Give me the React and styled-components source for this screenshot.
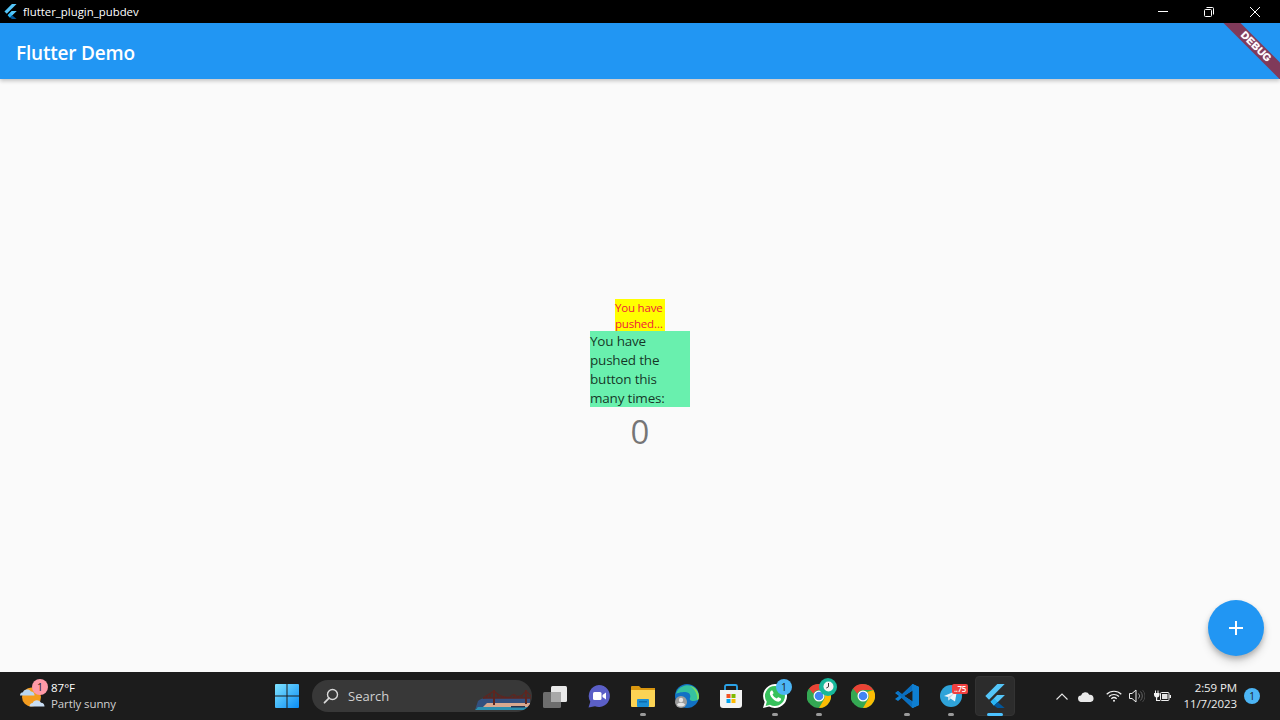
import React from 'react';
import styled, { createGlobalStyle } from 'styled-components';

const GlobalStyle = createGlobalStyle`
  html, body, #root {
    margin: 0;
    padding: 0;
    width: 100%;
    height: 100%;
    overflow: hidden;
  }
  body {
    font-family: 'Open Sans', 'Noto Sans', sans-serif;
  }
`;

const Screen = styled.div`
  width: 1280px;
  height: 720px;
  display: flex;
  flex-direction: column;
`;

const TitleBar = styled.div`
  height: 23px;
  flex: none;
  background: #000;
  display: flex;
  align-items: center;
  padding: 0 2px 0 3px;
  box-sizing: border-box;
  color: #fff;
`;

const WindowTitle = styled.div`
  margin-left: 5px;
  font-size: 11.4px;
  flex: 1;
`;

const WindowButton = styled.div`
  width: 46px;
  height: 23px;
  display: flex;
  align-items: center;
  justify-content: center;
`;

const AppWindow = styled.div`
  position: relative;
  flex: 1;
  display: flex;
  flex-direction: column;
  background: #fafafa;
`;

const AppBar = styled.div`
  position: relative;
  height: 56px;
  flex: none;
  display: flex;
  align-items: center;
  padding: 3px 0 0 16px;
  box-sizing: border-box;
  background: #2196f3;
  color: #fff;
  font-size: 19px;
  font-weight: 600;
  letter-spacing: -0.2px;
  box-shadow: 0 2px 4px rgba(0, 0, 0, 0.22);
  overflow: hidden;
`;

const DebugBanner = styled.div`
  position: absolute;
  top: 17.75px;
  right: -36.25px;
  width: 120px;
  height: 12px;
  line-height: 12px;
  transform: rotate(45deg);
  background: #803a5a;
  color: #fff;
  font-family: 'Liberation Sans', sans-serif;
  font-size: 10.2px;
  font-weight: 700;
  letter-spacing: 0.3px;
  text-align: center;
  text-shadow: 0 0 1px #fff;
`;

const Body = styled.div`
  flex: 1;
  display: flex;
  flex-direction: column;
  align-items: center;
  justify-content: center;
`;

const ShortLabel = styled.div`
  width: 50px;
  height: 32px;
  padding-top: 1px;
  box-sizing: border-box;
  background: #ffff00;
  color: #f0203a;
  font-size: 11.5px;
  line-height: 16px;
  letter-spacing: -0.2px;
  white-space: pre-line;
`;

const LongLabel = styled.div`
  width: 100px;
  height: 76px;
  padding-top: 1px;
  box-sizing: border-box;
  background: #69f0ae;
  color: rgba(0, 0, 0, 0.8);
  font-size: 13.5px;
  line-height: 19px;
  letter-spacing: -0.2px;
`;

const Counter = styled.div`
  height: 46px;
  line-height: 50px;
  font-size: 33px;
  color: rgba(0, 0, 0, 0.54);
`;

const Fab = styled.div`
  position: absolute;
  right: 16px;
  bottom: 16px;
  width: 56px;
  height: 56px;
  border-radius: 50%;
  background: #2196f3;
  display: flex;
  align-items: center;
  justify-content: center;
  box-shadow: 0 3px 5px rgba(0, 0, 0, 0.2), 0 6px 10px rgba(0, 0, 0, 0.14);
`;

const Taskbar = styled.div`
  height: 48px;
  flex: none;
  background: #1c1c1c;
  display: flex;
  align-items: center;
  color: #fff;
`;

const Weather = styled.div`
  width: 265px;
  height: 48px;
  flex: none;
  display: flex;
  align-items: center;
  padding-left: 19px;
  box-sizing: border-box;
`;

const WeatherIconBox = styled.div`
  position: relative;
  width: 28px;
  height: 28px;
  margin-right: 4px;
`;

const WeatherBadge = styled.div`
  position: absolute;
  top: -3px;
  right: -1px;
  width: 16px;
  height: 16px;
  border-radius: 50%;
  background: #ff9aa8;
  color: #222;
  font-size: 10.5px;
  line-height: 16px;
  text-align: center;
`;

const WeatherText = styled.div`
  display: flex;
  flex-direction: column;
  font-size: 11.5px;
  font-weight: 500;
  line-height: 16px;
`;

const Muted = styled.span`
  color: #cfcfcf;
  font-weight: 400;
  letter-spacing: -0.1px;
`;

const Slot = styled.div`
  position: relative;
  width: 44px;
  height: 48px;
  flex: none;
  display: flex;
  align-items: center;
  justify-content: center;
`;

const ActiveBack = styled.div`
  position: absolute;
  left: 2px;
  top: 4px;
  width: 40px;
  height: 40px;
  border-radius: 4px;
  background: #2c2c2c;
  border: 1px solid #333;
  box-sizing: border-box;
`;

const IconLayer = styled.div`
  position: relative;
  display: flex;
`;

const RunDot = styled.div`
  position: absolute;
  left: 50%;
  bottom: 4px;
  transform: translateX(-50%);
  width: ${props => (props.$active ? 16 : 6)}px;
  height: 3px;
  border-radius: 2px;
  background: ${props => (props.$active ? '#4cc2ff' : '#9a9a9a')};
`;

const CountBadge = styled.div`
  position: absolute;
  top: 7px;
  right: 5px;
  width: 16px;
  height: 16px;
  border-radius: 50%;
  background: #4cb5f5;
  color: #1c1c1c;
  font-size: 10.5px;
  line-height: 16px;
  text-align: center;
`;

const TelegramBadge = styled.div`
  position: absolute;
  top: 12px;
  right: 5px;
  width: 16px;
  height: 10px;
  border-radius: 2px;
  background: #f04040;
  color: #fff;
  font-size: 8px;
  font-weight: 600;
  line-height: 10px;
  text-align: center;
  letter-spacing: -0.4px;
  white-space: nowrap;
`;

const SearchBox = styled.div`
  width: 220px;
  height: 32px;
  flex: none;
  margin: 0 1px 0 3px;
  border-radius: 16px;
  background: #383838;
  display: flex;
  align-items: center;
  padding-left: 11px;
  box-sizing: border-box;
  position: relative;
  overflow: hidden;
`;

const SearchText = styled.span`
  margin-left: 9px;
  font-size: 13px;
  color: #d0d0d0;
`;

const SearchArt = styled.div`
  position: absolute;
  right: 1px;
  bottom: 0;
  display: flex;
`;

const Tray = styled.div`
  margin-left: auto;
  display: flex;
  align-items: center;
  padding-right: 20px;
`;

const TrayIcon = styled.div`
  display: flex;
  width: ${props => props.$w}px;
  justify-content: center;
`;

const Clock = styled.div`
  width: 58px;
  font-size: 11.5px;
  line-height: 16px;
  text-align: right;
  color: #eee;
  letter-spacing: -0.1px;
`;

const NotifyDot = styled.div`
  width: 16px;
  height: 16px;
  margin-left: 7px;
  border-radius: 50%;
  background: #4cb5f5;
  color: #1c1c1c;
  font-size: 10px;
  line-height: 16px;
  text-align: center;
`;

const ClockBadge = styled.div`
  position: absolute;
  top: 6px;
  right: 4px;
  display: flex;
`;

const FlutterLogo = ({ size }) => (
  <svg width={size} height={size} viewBox="0 0 24 24">
    <polygon points="14.3,0 21.7,0 6,15.7 2.3,12" fill="#54c5f8" />
    <polygon points="14.3,11.1 21.7,11.1 11,21.7 7.6,17.8" fill="#54c5f8" />
    <polygon points="11,14.4 14.3,11.1 21.7,11.1 14.6,18.1" fill="#54c5f8" />
    <polygon points="7.6,17.8 11,14.4 14.6,18 11,21.5" fill="#29b6f6" />
    <polygon points="11,21.5 14.6,18 21.7,24 14.3,24" fill="#01579b" />
  </svg>
);

const WeatherIcon = () => (
  <svg width="28" height="28" viewBox="0 0 28 28">
    <circle cx="12.500" cy="15" r="9.500" fill="#f39c1f" />
    <path d="M1 13.500c0-2 1.500-3.200 3-3.200 .8-3.400 6.500-3.800 8-.8 2 0 3.500 1.500 3.500 4z" fill="#b9d6f2" />
    <path d="M10.500 24.500c0-2 1.500-3.500 3.200-3.500 1-3.600 7-3.800 8.300-.2 2.200 0 3.500 1.700 3.500 3.700z" fill="#c9def4" />
  </svg>
);

const StartIcon = () => (
  <svg width="24" height="24" viewBox="0 0 24 24">
    <defs>
      <linearGradient id="startGrad" x1="0" y1="0" x2="1" y2="1">
        <stop offset="0" stopColor="#7fe3ff" />
        <stop offset="1" stopColor="#0a8cf5" />
      </linearGradient>
    </defs>
    <path d="M0 1a1 1 0 0 1 1-1h10.500v11.500H0zM12.500 0H23a1 1 0 0 1 1 1v10.500H12.500zM0 12.500h11.500V24H1a1 1 0 0 1-1-1zM12.500 12.500H24V23a1 1 0 0 1-1 1H12.500z" fill="url(#startGrad)" />
  </svg>
);

const SearchIcon = () => (
  <svg width="16" height="16" viewBox="0 0 16 16" fill="none" stroke="#d8d8d8" strokeWidth="1.400">
    <circle cx="9.500" cy="6.500" r="5" />
    <path d="M6 10.200 1.500 14.700" strokeWidth="1.800" strokeLinecap="round" />
  </svg>
);

const BridgeArt = () => (
  <svg width="56" height="24" viewBox="0 0 56 24">
    <path d="M0 22 3 13Q6 10 12 10H55V20H0z" fill="#33507f" />
    <path d="M12 15H55V19H8z" fill="#d8a88f" />
    <path d="M0 22 3 19H55V22z" fill="#2a8fb0" />
    <path d="M36 18h14v1.500H36z" fill="#26324c" />
    <g stroke="#5e2620" fill="none" strokeWidth="1.200">
      <path d="M19 2V17M51 2V16" strokeWidth="2" />
      <path d="M8 10 19 3Q27 11 35 9 38 5 41 8 46 10 51 3L56 8" />
      <path d="M8 10H56" strokeWidth="1.500" />
      <path d="M12 8v2M15 6v4M23 6v4M27 8v2M31 9v1M39 7v3M43 8v2M47 7v3" />
    </g>
  </svg>
);

const TaskViewIcon = () => (
  <svg width="24" height="24" viewBox="0 0 24 24">
    <rect x="8" y="2" width="16" height="16" rx="1.500" fill="#e8e8e8" />
    <rect x="0" y="8" width="18" height="16" rx="1.500" fill="#6d6d6d" />
    <rect x="8" y="8" width="10" height="10" fill="#a8a8a8" />
  </svg>
);

const ChatIcon = () => (
  <svg width="24" height="24" viewBox="0 0 24 24">
    <path d="M12 1a11 11 0 1 1-4 21.300L1.500 23.500l1.800-5.800A11 11 0 0 1 12 1z" fill="#5b5fc7" />
    <rect x="6" y="8" width="8.500" height="8" rx="1.500" fill="#fff" />
    <path d="M15.500 11 19 8.500v7L15.500 13z" fill="#fff" />
  </svg>
);

const FilesIcon = () => (
  <svg width="24" height="24" viewBox="0 0 24 24">
    <path d="M0 3a1 1 0 0 1 1-1h7l2 2h14v6H0z" fill="#d9960f" />
    <path d="M0 6h24v16a1 1 0 0 1-1 1H1a1 1 0 0 1-1-1z" fill="#fbd354" />
    <rect x="6" y="15" width="12" height="8" rx="1" fill="#1b8fd6" />
    <rect x="8" y="17" width="8" height="1.500" fill="#0b6cb0" />
  </svg>
);

const EdgeIcon = () => (
  <svg width="24" height="24" viewBox="0 0 24 24">
    <circle cx="12" cy="12" r="12" fill="#1271c4" />
    <path d="M1 10C3 2 12 0 17 2c5 2 7 7 7 11 0 3-3 4-6 4-2 0-4-1-3-3 1-2 0-6-5-6-4 0-8 1-9 2z" fill="#35c1a0" />
    <path d="M15 2c5 1 9 6 9 11 0 2-1 3-2 3 1-5-2-11-7-14z" fill="#7fdc5a" />
    <circle cx="6" cy="18" r="6" fill="#9b9b9b" />
    <circle cx="6" cy="16" r="2.200" fill="#e5e5e5" />
    <path d="M2 21c0-3 8-3 8 0a6 6 0 0 1-8 0z" fill="#e5e5e5" />
  </svg>
);

const StoreIcon = () => (
  <svg width="24" height="24" viewBox="0 0 24 24">
    <path d="M6 7V2.500A1.500 1.500 0 0 1 7.500 1h9A1.500 1.500 0 0 1 18 2.500V7" fill="none" stroke="#2ba3e8" strokeWidth="1.800" />
    <path d="M1 6h22v15a3 3 0 0 1-3 3H4a3 3 0 0 1-3-3z" fill="#f3f3f3" />
    <rect x="7.500" y="10" width="4" height="4" fill="#f25022" />
    <rect x="12.500" y="10" width="4" height="4" fill="#7fba00" />
    <rect x="7.500" y="15" width="4" height="4" fill="#00a4ef" />
    <rect x="12.500" y="15" width="4" height="4" fill="#ffb900" />
  </svg>
);

const WhatsAppIcon = () => (
  <svg width="26" height="26" viewBox="0 0 26 26">
    <path d="M13 1a12 12 0 1 1-5.800 22.500L1 25l1.700-6A12 12 0 0 1 13 1z" fill="#fff" />
    <path d="M13 3a10 10 0 1 1-5 18.700L3.600 23l1.200-4.300A10 10 0 0 1 13 3z" fill="#37c15c" />
    <path d="M9.500 7.500c-1 .5-2 2-1.500 4 1 3 4 6 7 7 2 .5 3.500-.5 4-1.800.2-.6.2-1 0-1.200l-2.500-1.300c-.3-.1-.5 0-.7.200l-1 1.200c-1.800-.6-3.500-2.300-4.300-4l.9-1c.2-.3.2-.5.1-.8L10.500 7.700c-.2-.3-.6-.4-1-.2z" fill="#fff" />
  </svg>
);

const ChromeIcon = () => (
  <svg width="24" height="24" viewBox="0 0 24 24">
    <circle cx="12" cy="12" r="12" fill="#34a853" />
    <path d="M12 0a12 12 0 0 1 10.400 6H12a6 6 0 0 0-5.600 3.800L2 4.500A12 12 0 0 1 12 0z" fill="#ea4335" />
    <path d="M22.400 6A12 12 0 0 1 12 24l5.200-9A6 6 0 0 0 16 8z" fill="#fbbc04" />
    <path d="M2 4.500A12 12 0 0 0 2 19" fill="#34a853" />
    <circle cx="12" cy="12" r="5.500" fill="#fff" />
    <circle cx="12" cy="12" r="4.300" fill="#4285f4" />
  </svg>
);

const ClockBadgeIcon = () => (
  <svg width="18" height="18" viewBox="0 0 18 18">
    <circle cx="9" cy="9" r="9" fill="#16b79a" />
    <circle cx="9.500" cy="8.500" r="5" fill="#f4f4f4" />
    <path d="M9.500 5v3.800l-2.200 1.200" stroke="#333" strokeWidth="1" fill="none" />
  </svg>
);

const VsCodeIcon = () => (
  <svg width="24" height="24" viewBox="0 0 24 24">
    <path d="M17.500 0 24 3v18l-6.500 3L7 14l3-3z" fill="#1f9cf0" />
    <path d="M17.500 0v24L24 21V3z" fill="#0e7fd2" />
    <path d="M17.500 6.500v11L9 12z" fill="#1c1c1c" />
    <path d="M3 7 0 9l4 3-4 3 3 2 6-5z" fill="#0e7fd2" />
    <path d="M17.500 0 7 10 3 7 1.500 8 7 14 17.500 24V17.500L9 12l8.500-5.500z" fill="#0a6fc0" />
  </svg>
);

const TelegramIcon = () => (
  <svg width="22" height="22" viewBox="0 0 22 22">
    <circle cx="11" cy="11" r="11" fill="#2fa3d9" />
    <path d="M4 11 17 5.500 15 16.500 10.500 13.500 8.500 15.500 8 12z" fill="#eef6fb" />
    <path d="M8 12 14.500 8 10 13l-1.500 2.500z" fill="#bcd9ea" />
  </svg>
);

const ChevronIcon = () => (
  <svg width="12" height="7" viewBox="0 0 12 7" fill="none" stroke="#e8e8e8" strokeWidth="1.100">
    <path d="M.5 6.500 6 1l5.500 5.500" />
  </svg>
);

const CloudIcon = () => (
  <svg width="16" height="11" viewBox="0 0 16 11">
    <path d="M3.500 11A3.200 3.200 0 0 1 3 4.600 4.500 4.500 0 0 1 11.300 3.700 3.700 3.700 0 0 1 12.500 11z" fill="#e8e8e8" />
  </svg>
);

const WifiIcon = () => (
  <svg width="16" height="12" viewBox="0 0 16 12" fill="none" stroke="#f0f0f0" strokeWidth="1.200">
    <path d="M.7 4.200a10.500 10.500 0 0 1 14.600 0" />
    <path d="M3 6.500a7.200 7.200 0 0 1 10 0" />
    <path d="M5.300 8.800a3.900 3.900 0 0 1 5.400 0" />
    <circle cx="8" cy="10.800" r="1" fill="#f0f0f0" stroke="none" />
  </svg>
);

const VolumeIcon = () => (
  <svg width="16" height="14" viewBox="0 0 16 14" fill="none" stroke="#eee" strokeWidth="1">
    <path d="M.5 4.500h2.500L7 1v12L3 9.500H.5z" />
    <path d="M9.500 4.500a3.500 3.500 0 0 1 0 5" stroke="#999" />
    <path d="M11.500 2.500a6.500 6.500 0 0 1 0 9" stroke="#666" />
    <path d="M13.500 1a8.500 8.500 0 0 1 0 12" stroke="#444" />
  </svg>
);

const BatteryIcon = () => (
  <svg width="17" height="12" viewBox="0 0 17 12">
    <path d="M1 .5h1v2.500H1zM3.500 .5h1v2.500h-1zM0 3h5.500v2a2.700 2.700 0 0 1-2.300 2.500V10H6v1H2V7.500A2.700 2.700 0 0 1 0 5z" fill="#f0f0f0" />
    <rect x="6.500" y="2.500" width="8.500" height="8" rx="1" fill="#1c1c1c" stroke="#f0f0f0" />
    <rect x="8" y="4" width="5.500" height="5" fill="#e4e4e4" />
    <rect x="15.500" y="5" width="1.500" height="3" fill="#f0f0f0" />
  </svg>
);

const apps = [
  { name: 'chat', icon: <ChatIcon /> },
  { name: 'files', icon: <FilesIcon />, running: true },
  { name: 'edge', icon: <EdgeIcon /> },
  { name: 'store', icon: <StoreIcon /> },
  { name: 'whatsapp', icon: <WhatsAppIcon />, running: true, badge: <CountBadge>1</CountBadge> },
  { name: 'chrome-work', icon: <ChromeIcon />, running: true, badge: <ClockBadge><ClockBadgeIcon /></ClockBadge> },
  { name: 'chrome', icon: <ChromeIcon /> },
  { name: 'vscode', icon: <VsCodeIcon />, running: true },
  { name: 'telegram', icon: <TelegramIcon />, running: true, badge: <TelegramBadge>..75</TelegramBadge> },
];

export default function App() {
  return (
    <Screen>
      <GlobalStyle />
      <TitleBar>
        <FlutterLogo size={15} />
        <WindowTitle>flutter_plugin_pubdev</WindowTitle>
        <WindowButton>
          <svg width="10" height="1" viewBox="0 0 10 1"><rect width="10" height="1" fill="#fff" /></svg>
        </WindowButton>
        <WindowButton>
          <svg width="10" height="10" viewBox="0 0 10 10" fill="none" stroke="#fff" strokeWidth="1">
            <rect x=".5" y="2.500" width="7" height="7" rx="1" />
            <path d="M2.500 .5h6a1 1 0 0 1 1 1v6" />
          </svg>
        </WindowButton>
        <WindowButton>
          <svg width="10" height="10" viewBox="0 0 10 10" stroke="#fff" strokeWidth="1">
            <path d="M0 0l10 10M10 0 0 10" />
          </svg>
        </WindowButton>
      </TitleBar>
      <AppWindow>
        <AppBar>
          Flutter Demo
          <DebugBanner>DEBUG</DebugBanner>
        </AppBar>
        <Body>
          <ShortLabel>{'You have\npushed…'}</ShortLabel>
          <LongLabel>You have pushed the button this many times:</LongLabel>
          <Counter>0</Counter>
        </Body>
        <Fab>
          <svg width="14" height="14" viewBox="0 0 14 14"><path d="M6 0h2v6h6v2H8v6H6V8H0V6h6z" fill="#fff" /></svg>
        </Fab>
      </AppWindow>
      <Taskbar>
        <Weather>
          <WeatherIconBox>
            <WeatherIcon />
            <WeatherBadge>1</WeatherBadge>
          </WeatherIconBox>
          <WeatherText>
            <span>87°F</span>
            <Muted>Partly sunny</Muted>
          </WeatherText>
        </Weather>
        <Slot><StartIcon /></Slot>
        <SearchBox>
          <SearchIcon />
          <SearchText>Search</SearchText>
          <SearchArt><BridgeArt /></SearchArt>
        </SearchBox>
        <Slot><TaskViewIcon /></Slot>
        {apps.map(app => (
          <Slot key={app.name}>
            {app.icon}
            {app.badge}
            {app.running && <RunDot />}
          </Slot>
        ))}
        <Slot>
          <ActiveBack />
          <IconLayer><FlutterLogo size={24} /></IconLayer>
          <RunDot $active />
        </Slot>
        <Tray>
          <TrayIcon $w={22}><ChevronIcon /></TrayIcon>
          <TrayIcon $w={26}><CloudIcon /></TrayIcon>
          <TrayIcon $w={30}><WifiIcon /></TrayIcon>
          <TrayIcon $w={16}><VolumeIcon /></TrayIcon>
          <TrayIcon $w={34}><BatteryIcon /></TrayIcon>
          <Clock>
            2:59 PM
            <br />
            11/7/2023
          </Clock>
          <NotifyDot>1</NotifyDot>
        </Tray>
      </Taskbar>
    </Screen>
  );
}
